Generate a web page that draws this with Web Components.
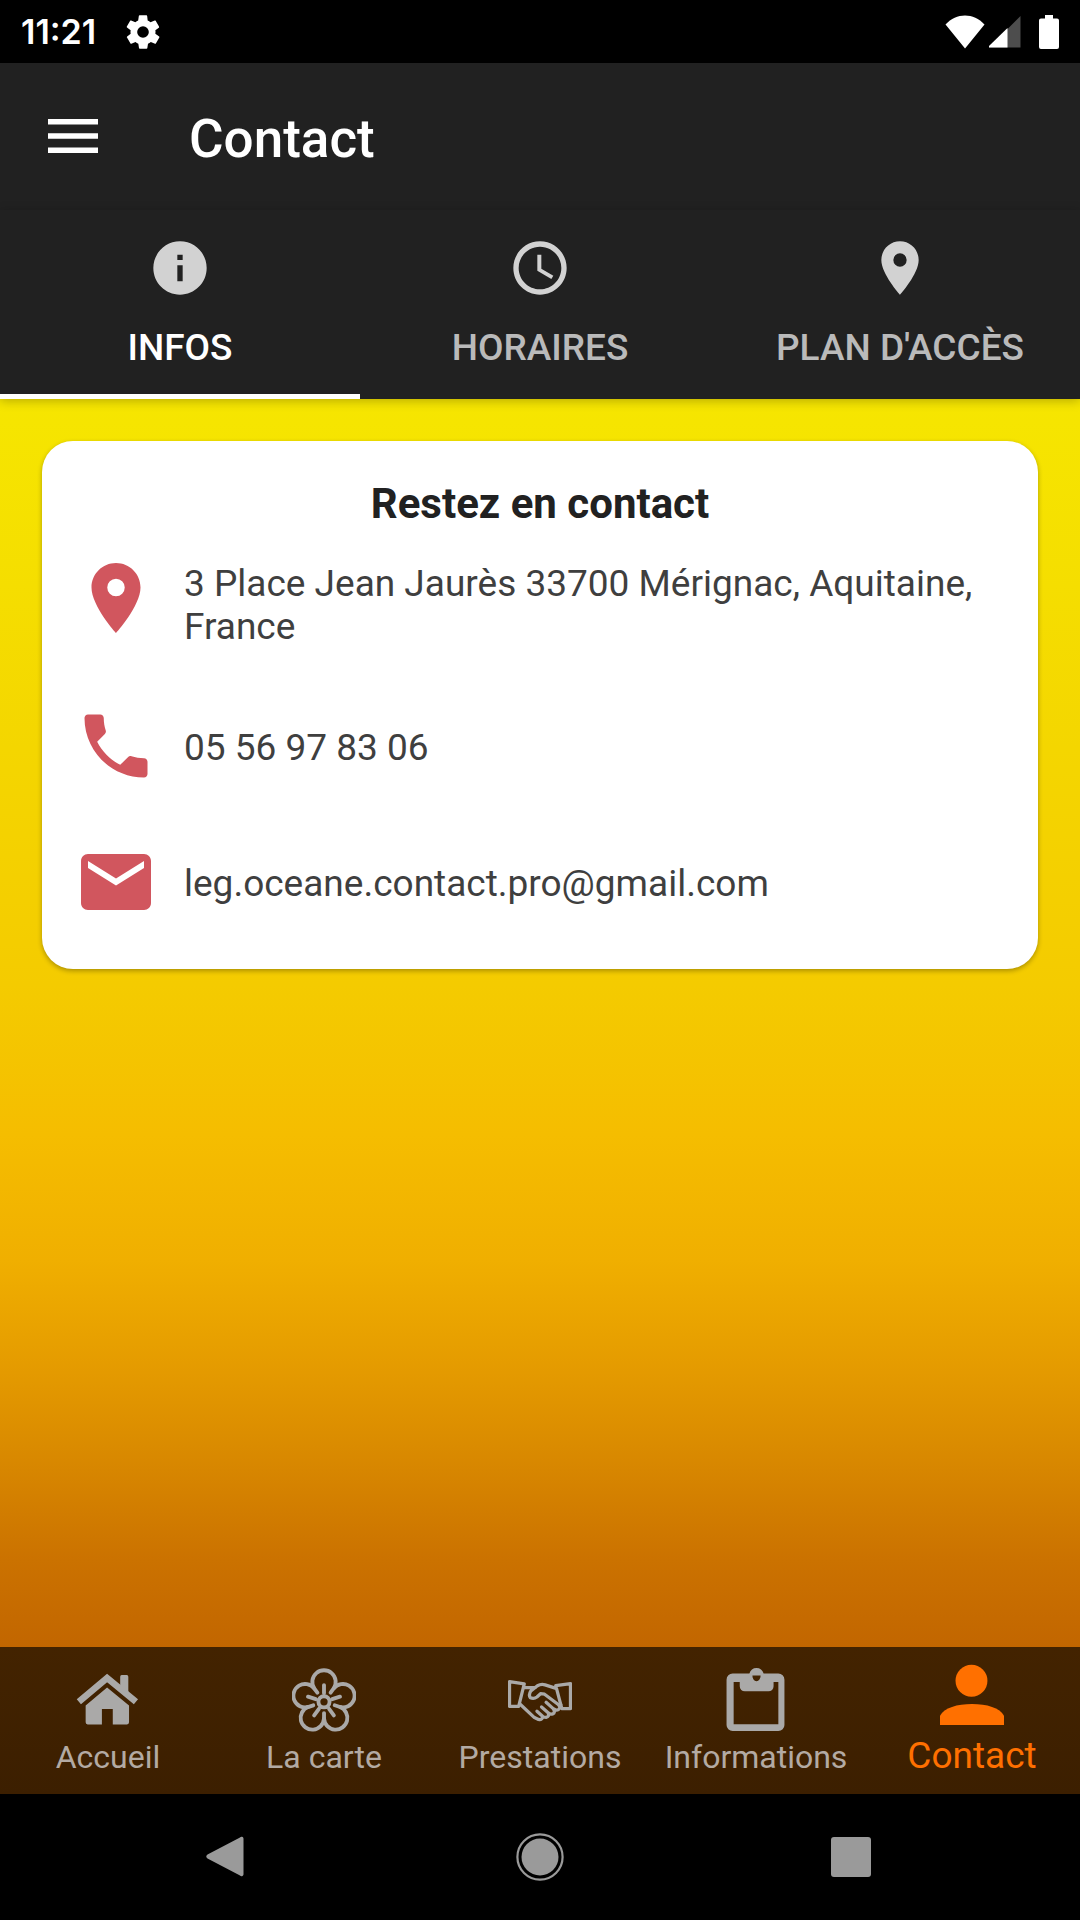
<!DOCTYPE html>
<html lang="fr">
<head>
<meta charset="utf-8">
<meta name="viewport" content="width=device-width, initial-scale=1">
<title>Contact</title>
<style>
  html, body { margin: 0; }
  body { background: #000; font-family: Roboto, "Noto Sans", sans-serif; }
</style>
</head>
<body>
<contact-screen></contact-screen>

<script>
const ICONS = {
  settings: ['0 0 24 24', '<path fill-rule="evenodd" d="M19.4 13c0-.3.1-.6.1-1s0-.7-.1-1l2.100-1.600c.2-.2.3-.4.1-.7l-2-3.400c-.1-.2-.4-.3-.6-.2l-2.500 1c-.5-.4-1.100-.7-1.700-1L14.500 2.400c0-.2-.3-.4-.5-.4h-4c-.3 0-.5.2-.5.4l-.4 2.700c-.6.2-1.100.6-1.700 1l-2.500-1c-.2-.1-.5 0-.6.2l-2 3.400c-.1.200-.1.500.1.600L4.600 11c0 .3-.1.700-.1 1s0 .7.100 1l-2.100 1.700c-.2.1-.3.400-.1.600l2 3.400c.1.300.4.300.6.300l2.500-1c.5.400 1.100.7 1.700 1l.4 2.600c0 .2.200.4.500.4h4c.3 0 .5-.2.500-.4l.4-2.600c.6-.3 1.100-.6 1.700-1l2.500 1c.2.100.5 0 .6-.3l2-3.400c.1-.2.100-.4-.1-.6zM12 15.500a3.500 3.500 0 1 1 0-7 3.500 3.500 0 0 1 0 7z"/>'],
  wifi: ['0 0 40 34', '<path d="M20 33.500 0.500 9.500C6 3.500 13 .5 20 .5s14 3 19.500 9z"/>'],
  signal: ['0 0 32 32', '<path opacity=".3" d="M31.500 0v31.500H0z"/><path d="M18.500 12v19.500H0V30z"/>'],
  battery: ['0 0 20 34', '<path d="M6 0h8v3.500h4a2 2 0 0 1 2 2V32a2 2 0 0 1-2 2H2a2 2 0 0 1-2-2V5.500a2 2 0 0 1 2-2h4z"/>'],
  menu: ['0 0 50 34', '<path d="M0 0h50v5.500H0zM0 14.200h50v5.600H0zM0 28.500h50V34H0z"/>'],
  info: ['0 0 24 24', '<path d="M12 2C6.480 2 2 6.480 2 12s4.480 10 10 10 10-4.480 10-10S17.520 2 12 2zm1 15h-2v-6h2v6zm0-8h-2V7h2v2z"/>'],
  clock: ['0 0 24 24', '<path d="M11.990 2C6.470 2 2 6.480 2 12s4.470 10 9.990 10C17.520 22 22 17.520 22 12S17.520 2 11.990 2zM12 20c-4.420 0-8-3.580-8-8s3.580-8 8-8 8 3.580 8 8-3.580 8-8 8zm.5-13H11v6l5.250 3.150.75-1.230-4.500-2.670z"/>'],
  place: ['0 0 24 24', '<path d="M12 2C8.130 2 5 5.130 5 9c0 5.250 7 13 7 13s7-7.750 7-13c0-3.870-3.130-7-7-7zm0 9.500a2.500 2.500 0 0 1 0-5 2.500 2.500 0 0 1 0 5z"/>'],
  phone: ['0 0 24 24', '<path d="M6.620 10.790c1.440 2.830 3.760 5.140 6.590 6.590l2.200-2.200c.27-.27.67-.36 1.020-.24 1.120.37 2.330.57 3.570.57.550 0 1 .45 1 1V20c0 .55-.45 1-1 1-9.390 0-17-7.610-17-17 0-.55.45-1 1-1h3.500c.55 0 1 .45 1 1 0 1.250.2 2.450.57 3.570.11.350.03.740-.25 1.020l-2.200 2.200z"/>'],
  mail: ['0 0 24 24', '<path d="M20 4H4c-1.100 0-1.990.9-1.990 2L2 18c0 1.100.9 2 2 2h16c1.100 0 2-.9 2-2V6c0-1.100-.9-2-2-2zm0 4l-8 5-8-5V6l8 5 8-5v2z"/>'],
  home: ['0 0 63 63', '<path d="M2.800 33.200 30.600 9.900 59 33.200" fill="none" stroke="currentColor" stroke-width="6.500"/><path d="M43.500 8.500a1.500 1.500 0 0 1 1.500-1.500h5a1.500 1.500 0 0 1 1.500 1.500V26l-8-6.500zM30.600 19.300 52.200 37v16.500a2 2 0 0 1-2 2h-14V40.300H25.500v15.200h-14a2 2 0 0 1-2-2V37z"/>'],
  flower: ['0 0 63 63', '<g transform="translate(31.500 33.300)" fill="none" stroke="currentColor" stroke-width="3.800" stroke-linecap="round"><circle r="5.500"/>' +
    [0, 72, 144, 216, 288].map(a => `<path transform="rotate(${a})" d="M-9.700-13.400A11.500 11.500 0 1 1 9.700-13.400L6.500-9M0-8.500V-16.500"/>`).join('') + '</g>'],
  handshake: ['0 0 63 63', '<g fill="none" stroke="currentColor" stroke-width="3.200" stroke-linejoin="round" stroke-linecap="round"><path d="M1.500 13.500 16 15.700 10.500 37.700H1.500zM61.500 15.300 47 17.300 53 40h8.500z"/><path d="M16 19.300h11M46.500 19.800 36.500 16.600Q32.500 15.500 29 17.500L22.500 22.500Q20 26.500 22 29.200 25.500 30.700 28.500 28.500L32 25.300 36 25.800 49.500 36Q52.500 39 49.500 41 47.500 42.200 44.500 40 47 44 44 45.200 41.500 46 39.500 44 41 48 37.500 48.700 35 48.700 34 47.500 34 51.500 30 50.600L26 48.800 12 35.700M50.500 37 52 36M37.500 33.700l7 6.300M33 38.300l6.500 5.700M28.500 42.500l5.500 5"/></g>'],
  clipboard: ['0 0 63 63', '<path fill-rule="evenodd" d="M8.500 5.500H25C26 2 28.500 0 32 0s6 2 7 5.500h14.500a6 6 0 0 1 6 6V56a6 6 0 0 1-6 6h-45a6 6 0 0 1-6-6V11.500a6 6 0 0 1 6-6zM9.500 13.700v41.600h44V13.700h-4.700V18a5 5 0 0 1-5 5H20.500a5 5 0 0 1-5-5V13.700zM28 7.500c0 3 1.500 5.500 4 5.500s4-2.500 4-5.500z"/>'],
  person: ['0 0 63 63', '<circle cx="31" cy="17.500" r="15.700"/><path d="M0 61V52C4 44 17 40.300 31.500 40.300S59 44 63 52v9z"/>'],
  back: ['0 0 48 48', '<path d="M39.500 5.500v36a2 2 0 0 1-3.500 1L3.500 25.500q-2.500-2 0-4L36 4.500a2 2 0 0 1 3.500 1z"/>'],
  homeRing: ['0 0 48 48', '<circle cx="24" cy="24" r="18.500"/><circle cx="24" cy="24" r="22.600" fill="none" stroke="currentColor" stroke-width="2.200"/>'],
  recent: ['0 0 48 48', '<rect x="3" y="4" width="40" height="40" rx="3"/>']
};

class AppIcon extends HTMLElement {
  connectedCallback() {
    const [box, shape] = ICONS[this.getAttribute('name')];
    this.attachShadow({ mode: 'open' }).innerHTML = `
      <style>
        :host { display: block; flex: none; width: var(--icon-w, 64px); height: var(--icon-h, var(--icon-w, 64px)); }
        svg { display: block; width: 100%; height: 100%; fill: currentColor; }
      </style>
      <svg viewBox="${box}" aria-hidden="true">${shape}</svg>`;
  }
}

class StatusBar extends HTMLElement {
  connectedCallback() {
    this.attachShadow({ mode: 'open' }).innerHTML = `
      <style>
        :host { display: flex; align-items: center; height: 63px; padding: 0 21px; background: #000; color: #fff; }
        time { font: 600 34px/63px Inter, sans-serif; }
        .gear { --icon-w: 40px; margin-left: 27px; }
        .right { display: flex; align-items: center; margin-left: auto; }
        .wifi { --icon-w: 40px; --icon-h: 34px; }
        .signal { --icon-w: 32px; margin-left: 4px; }
        .battery { --icon-w: 20px; --icon-h: 34px; margin-left: 18px; }
      </style>
      <time>11:21</time>
      <app-icon class="gear" name="settings"></app-icon>
      <span class="right">
        <app-icon class="wifi" name="wifi"></app-icon>
        <app-icon class="signal" name="signal"></app-icon>
        <app-icon class="battery" name="battery"></app-icon>
      </span>`;
  }
}

class AppBar extends HTMLElement {
  connectedCallback() {
    this.attachShadow({ mode: 'open' }).innerHTML = `
      <style>
        :host { display: flex; align-items: center; height: 147px; padding-left: 48px; gap: 91px; background: #212121; color: #fff; box-shadow: 0 1px 8px rgba(0,0,0,.2); position: relative; }
        button { border: 0; padding: 0 0 2px; background: none; color: inherit; --icon-w: 50px; --icon-h: 34px; }
        h1 { margin: 0; padding-top: 4px; font-size: 53px; font-weight: 500; line-height: 62px; }
      </style>
      <button type="button" aria-label="Menu"><app-icon name="menu"></app-icon></button>
      <h1><slot></slot></h1>`;
  }
}

class TabItem extends HTMLElement {
  connectedCallback() {
    this.attachShadow({ mode: 'open' }).innerHTML = `
      <style>
        :host { display: block; flex: 1; min-width: 0; }
        button { display: flex; flex-direction: column; align-items: center; gap: 26px; box-sizing: border-box; width: 100%; height: 189px; padding: 26px 0 0; border: 0; border-bottom: 5px solid transparent; background: none; color: #bababa; font: 500 37px/43px Roboto, sans-serif; text-transform: uppercase; }
        app-icon { color: #d2d2d2; }
        :host([selected]) button { color: #fff; border-color: #fff; }
      </style>
      <button type="button" role="tab" aria-selected="${this.hasAttribute('selected')}">
        <app-icon name="${this.getAttribute('icon')}"></app-icon>
        <span><slot></slot></span>
      </button>`;
  }
}

class TabBar extends HTMLElement {
  connectedCallback() {
    this.attachShadow({ mode: 'open' }).innerHTML = `
      <style>
        :host { display: flex; background: #212121; box-shadow: 0 2px 10px rgba(0,0,0,.25); }
      </style>
      <slot></slot>`;
    this.setAttribute('role', 'tablist');
  }
}

class ContactRow extends HTMLElement {
  connectedCallback() {
    this.attachShadow({ mode: 'open' }).innerHTML = `
      <style>
        :host { display: flex; gap: 26px; min-height: 84px; --icon-w: 84px; }
        app-icon { color: #d1565e; }
        p { margin: 0; padding: 6px 0 4px; align-self: center; font-size: 37px; line-height: 43px; color: #3f3f3f; }
        ::slotted(a) { color: inherit; text-decoration: none; }
      </style>
      <app-icon name="${this.getAttribute('icon')}"></app-icon>
      <p><slot></slot></p>`;
  }
}

class ContactCard extends HTMLElement {
  connectedCallback() {
    this.attachShadow({ mode: 'open' }).innerHTML = `
      <style>
        :host { display: block; padding: 38px 32px 45px; border-radius: 31px; background: #fff; box-shadow: 0 2px 5px rgba(0,0,0,.3); }
        h2 { margin: 0 0 28px; font-size: 42px; line-height: 49px; font-weight: 700; text-align: center; color: #212121; }
        .rows { display: flex; flex-direction: column; gap: 52px; }
      </style>
      <h2><slot name="title"></slot></h2>
      <div class="rows"><slot></slot></div>`;
  }
}

class NavItem extends HTMLElement {
  connectedCallback() {
    this.attachShadow({ mode: 'open' }).innerHTML = `
      <style>
        :host { display: block; flex: 1 1 0; min-width: 0; }
        button { display: flex; flex-direction: column; align-items: center; justify-content: space-between; box-sizing: border-box; width: 100%; height: 147px; padding: 21px 0 18px; border: 0; background: none; color: #b3aaa3; font: 32px/38px Roboto, sans-serif; white-space: nowrap; }
        app-icon { color: #aaa9a8; }
        :host([selected]) button { padding: 16px 0 17px; color: #ff7000; font-size: 37px; line-height: 43px; }
        :host([selected]) app-icon { color: inherit; }
      </style>
      <button type="button">
        <app-icon name="${this.getAttribute('icon')}"></app-icon>
        <span><slot></slot></span>
      </button>`;
  }
}

class BottomNav extends HTMLElement {
  connectedCallback() {
    this.attachShadow({ mode: 'open' }).innerHTML = `
      <style>
        :host { display: block; background: linear-gradient(#432300, #3c1f00); }
        nav { display: flex; }
      </style>
      <nav><slot></slot></nav>`;
  }
}

class SystemNav extends HTMLElement {
  connectedCallback() {
    this.attachShadow({ mode: 'open' }).innerHTML = `
      <style>
        :host { display: flex; justify-content: center; height: 126px; background: #000; color: #9a9a9a; --icon-w: 48px; }
        button { display: flex; align-items: center; justify-content: center; flex: 0 1 312px; padding: 0; border: 0; background: none; color: inherit; }
      </style>
      <button type="button" aria-label="Retour"><app-icon name="back"></app-icon></button>
      <button type="button" aria-label="Écran d'accueil"><app-icon name="homeRing"></app-icon></button>
      <button type="button" aria-label="Applications récentes"><app-icon name="recent"></app-icon></button>`;
  }
}

class ContactScreen extends HTMLElement {
  connectedCallback() {
    this.attachShadow({ mode: 'open' }).innerHTML = `
      <style>
        :host { display: flex; flex-direction: column; min-height: 100vh; }
        tab-bar { z-index: 1; }
        main { flex: 1; padding: 42px; background: linear-gradient(#f6e600, #f5de00 15%, #f4d600 28%, #f4cb00 47%, #f5bd00 59%, #f0af00 69%, #e49a00 78%, #da8b00 84%, #cb7200 93%, #c26600); }
      </style>
      <status-bar></status-bar>
      <app-bar>Contact</app-bar>
      <tab-bar>
        <tab-item icon="info" selected>Infos</tab-item>
        <tab-item icon="clock">Horaires</tab-item>
        <tab-item icon="place">Plan d'accès</tab-item>
      </tab-bar>
      <main>
        <contact-card>
          <span slot="title">Restez en contact</span>
          <contact-row icon="place">3 Place Jean Jaurès 33700 Mérignac, Aquitaine, France</contact-row>
          <contact-row icon="phone"><a href="tel:0556978306">05 56 97 83 06</a></contact-row>
          <contact-row icon="mail"><a href="mailto:leg.oceane.contact.pro@gmail.com">leg.oceane.contact.pro@gmail.com</a></contact-row>
        </contact-card>
      </main>
      <bottom-nav>
        <nav-item icon="home">Accueil</nav-item>
        <nav-item icon="flower">La carte</nav-item>
        <nav-item icon="handshake">Prestations</nav-item>
        <nav-item icon="clipboard">Informations</nav-item>
        <nav-item icon="person" selected>Contact</nav-item>
      </bottom-nav>
      <system-nav></system-nav>`;
  }
}

customElements.define('app-icon', AppIcon);
customElements.define('status-bar', StatusBar);
customElements.define('app-bar', AppBar);
customElements.define('tab-item', TabItem);
customElements.define('tab-bar', TabBar);
customElements.define('contact-row', ContactRow);
customElements.define('contact-card', ContactCard);
customElements.define('nav-item', NavItem);
customElements.define('bottom-nav', BottomNav);
customElements.define('system-nav', SystemNav);
customElements.define('contact-screen', ContactScreen);
</script>
</body>
</html>
